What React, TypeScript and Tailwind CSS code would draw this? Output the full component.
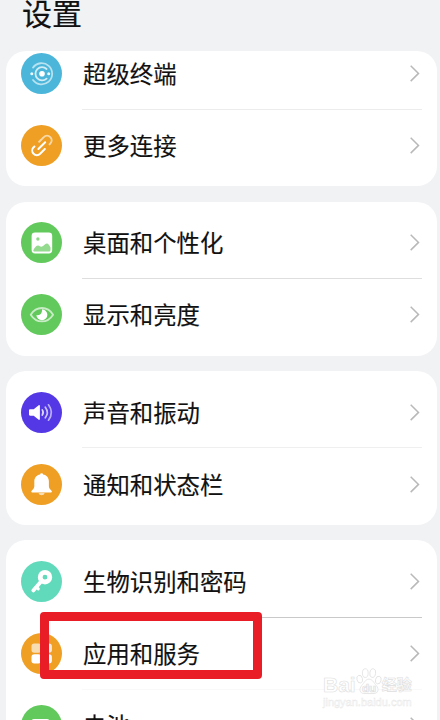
import type { ReactNode } from 'react';
import clsx from 'clsx';

type Item = {
  label: string;
  color: string;
  icon: ReactNode;
};

const DeviceIcon = () => (
  <g fill="none" stroke="#fff" strokeLinecap="round">
    <path d="M12 14.600a10.600 10.600 0 1 1 0 12.400" strokeWidth="1.800" opacity=".6" />
    <path d="M25.600 16a6.600 6.600 0 1 0 0 9.600" strokeWidth="1.800" opacity=".75" />
    <circle cx="21" cy="20.800" r="2.800" fill="#fff" stroke="none" />
    <circle cx="10.800" cy="20.800" r="1.500" fill="#fff" stroke="none" opacity=".9" />
    <circle cx="27.700" cy="20.800" r="1.500" fill="#fff" stroke="none" opacity=".9" />
  </g>
);

const LinkIcon = () => (
  <g fill="none" stroke="#fff" strokeWidth="2" strokeLinecap="round" transform="rotate(-45 20.800 20.600)">
    <path d="M20.500 16h6.500a4.600 4.600 0 0 1 0 9.200h-1" opacity=".6" transform="translate(1.200 0)" />
    <path d="M15 16h-1.200a4.600 4.600 0 0 0 0 9.200h6.700" />
    <path d="M16 20.600h9.600" />
  </g>
);

const PictureIcon = () => (
  <g>
    <rect x="10.600" y="10.500" width="20.600" height="21" rx="3.400" fill="#fff" />
    <circle cx="16.900" cy="17" r="1.700" fill="#8fd88a" />
    <path d="M12.300 28.300c1.500-2.900 3.100-4.800 4.800-4.800 1.300 0 2 1.300 3.200 1.300 1.900 0 3.500-3.300 5.500-3.300 1.500 0 2.700 2 3.700 4v2.600c0 .9-.6 1.500-1.500 1.500H13.600c-.8 0-1.300-.5-1.300-1.300Z" fill="#94da8f" />
  </g>
);

const EyeIcon = () => (
  <g>
    <path
      d="M9.700 20.700c2.700-4.300 6.500-6.700 11.200-6.700s8.500 2.400 11.200 6.700c-2.700 4.300-6.500 6.700-11.200 6.700s-8.500-2.400-11.200-6.700Z"
      fill="none"
      stroke="#fff"
      strokeWidth="1.800"
      strokeLinejoin="round"
      opacity=".65"
    />
    <path d="M20.900 15.300a5.500 5.500 0 1 1-5.500 5.700c3.400 1 6.200-2 5.500-5.700Z" fill="#fff" />
  </g>
);

const SpeakerIcon = () => (
  <g>
    <path
      d="M9.200 17.200h3.500l5-3.900c.6-.4 1.200-.1 1.200.6v13.200c0 .7-.6 1-1.200.6l-5-3.900H9.200c-.7 0-1.200-.5-1.200-1.200v-4.200c0-.7.500-1.200 1.200-1.200Z"
      fill="#fff"
    />
    <g fill="none" stroke="#fff" strokeWidth="1.700" strokeLinecap="round">
      <path d="M21.300 17.900q1.700 2.600 0 5.200" opacity=".8" />
      <path d="M24.300 15.200q4 5.300 0 10.600" opacity=".7" />
      <path d="M27.500 12.800q5.800 7.700 0 15.400" opacity=".6" />
    </g>
  </g>
);

const BellIcon = () => (
  <g fill="#fff">
    <path d="M17.500 28.900a3.200 3.200 0 0 0 6.200 0Z" opacity=".65" />
    <path d="M20.600 9.300c.8 0 1.400.5 1.500 1.200 3.500.7 5.800 3.300 5.800 6.900v4.500c0 1.500.5 2.600 1.500 3.700l1.100 1.200c.9 1 .4 1.700-.6 1.700H11.300c-1 0-1.500-.7-.6-1.700l1.100-1.200c1-1.100 1.500-2.200 1.500-3.700v-4.500c0-3.600 2.300-6.200 5.800-6.900.1-.7.700-1.200 1.500-1.200Z" />
  </g>
);

const KeyIcon = () => (
  <g fill="none" stroke="#fff">
    <path d="m20.300 20.200-8 9.200" strokeWidth="3.800" strokeLinecap="round" />
    <path d="m15.300 26 2 1.900" strokeWidth="3" strokeLinecap="round" />
    <circle cx="24" cy="16.200" r="4.800" strokeWidth="4.800" />
  </g>
);

const AppsIcon = () => (
  <g fill="#fff">
    <rect x="10.500" y="10.400" width="9.500" height="9.300" rx="2.700" opacity=".65" />
    <rect x="21.300" y="10.400" width="9.500" height="9.300" rx="2.700" opacity=".85" />
    <rect x="10.500" y="21.200" width="9.500" height="9.300" rx="2.700" />
    <rect x="21.300" y="21.200" width="9.500" height="9.300" rx="2.700" />
  </g>
);

const BatteryIcon = () => <rect x="10.500" y="14" width="18" height="12.500" rx="2.500" fill="#fff" />;

const groups: Item[][] = [
  [
    { label: '超级终端', color: '#4bb6da', icon: <DeviceIcon /> },
    { label: '更多连接', color: '#ee9f24', icon: <LinkIcon /> },
  ],
  [
    { label: '桌面和个性化', color: '#62c95c', icon: <PictureIcon /> },
    { label: '显示和亮度', color: '#62c95c', icon: <EyeIcon /> },
  ],
  [
    { label: '声音和振动', color: '#5438e6', icon: <SpeakerIcon /> },
    { label: '通知和状态栏', color: '#ee9f24', icon: <BellIcon /> },
  ],
  [
    { label: '生物识别和密码', color: '#61dabb', icon: <KeyIcon /> },
    { label: '应用和服务', color: '#ee9f24', icon: <AppsIcon /> },
    { label: '电池', color: '#62c95c', icon: <BatteryIcon /> },
  ],
];

// divider under each row, null for the last one of a card
const dividers = [
  ['border-[#ececec]', null],
  ['border-[#dedede]', null],
  ['border-[#efefef]', null],
  ['border-[#c9c9c9]', 'border-[#f9f9f9]', null],
];

const Row = ({ item, divider }: { item: Item; divider: string | null }) => (
  <div className="flex h-[72px] shrink-0 items-center px-[15px]">
    <svg width="41" height="41" viewBox="0 0 41 41" className="shrink-0">
      <circle cx="20.500" cy="20.500" r="20.500" fill={item.color} />
      {item.icon}
    </svg>
    <div
      className={clsx(
        'ml-[20px] flex h-full flex-1 items-center justify-between border-b pr-[2px]',
        divider ?? 'border-transparent',
      )}
    >
      <span className="pl-px pt-[2px] text-[23.400px] leading-none text-[#111] [-webkit-text-stroke:0.150px_#111]">
        {item.label}
      </span>
      <svg width="10" height="18" viewBox="0 0 10 18" fill="none" stroke="#b9b9b9" strokeWidth="1.500">
        <path d="M.7 1.700 8.500 9.400.7 17.100" />
      </svg>
    </div>
  </div>
);

const Watermark = () => (
  <div className="absolute left-[323px] top-[665px] w-[92px] text-white">
    <div className="flex h-[31px] items-end font-['Liberation_Sans','Noto_Sans_CJK_SC',sans-serif] font-bold [-webkit-text-stroke:0.600px_#dedede]">
      <span className="text-[21px] leading-[23px]">Bai</span>
      <svg width="26" height="30" viewBox="0 0 28 30" className="shrink-0" fill="#fff" stroke="#dedede" strokeWidth=".8">
        <ellipse cx="4" cy="13" rx="3" ry="4.200" transform="rotate(-15 4 13)" />
        <ellipse cx="10" cy="6.500" rx="3.100" ry="4.700" />
        <ellipse cx="18" cy="6.500" rx="3.100" ry="4.700" transform="rotate(10 18 6.500)" />
        <ellipse cx="24" cy="14" rx="3" ry="4.200" transform="rotate(15 24 14)" />
        <path d="M14 13c4 0 5 4 8 7 3 3.500 2 8.500-2.500 8.500h-11C4 28.500 3 23.500 6 20c3-3 4-7 8-7Z" />
        <text x="6.500" y="26.500" fontSize="12.500" className="[-webkit-text-stroke:0.600px_#d0d0d0]">
          du
        </text>
      </svg>
      <span className="text-[15px] leading-[23px]">经验</span>
    </div>
    <div className="whitespace-nowrap font-['Liberation_Sans',sans-serif] text-[11px] leading-[12px] text-[#fcfcfc] [-webkit-text-stroke:0.400px_#e8e8e8]">
      jingyan.baidu.com
    </div>
  </div>
);

const App = () => {
  return (
    <div className="relative h-[720px] w-[440px] overflow-hidden bg-[#f1f2f4] font-['Noto_Sans_CJK_SC',sans-serif]">
      <header className="flex h-[51px] items-start pl-[22px]">
        <h1 className="-mt-[3px] text-[30px] leading-[30px] text-[#111] [-webkit-text-stroke:0.200px_#111]">设置</h1>
      </header>

      <main className="flex flex-col gap-[15.500px] pl-[6px] pr-[3px]">
        {groups.map((items, i) => (
          <section
            key={i}
            className={clsx(
              'flex flex-col overflow-hidden rounded-[20px] bg-white',
              i === 0 && 'h-[135px] justify-end pb-[4.500px]',
              i === 1 && 'h-[154px] pt-[5px]',
              i === 2 && 'h-[153.500px] pt-[5px]',
              i === 3 && 'pt-[5.500px]',
            )}
          >
            {items.map((item, j) => (
              <Row key={item.label} item={item} divider={dividers[i][j]} />
            ))}
          </section>
        ))}
      </main>

      <div className="absolute left-[40px] top-[612px] h-[67px] w-[222px] rounded-[4px] border-[9px] border-[#e91d25]" />
      <Watermark />
    </div>
  );
};

export default App;
